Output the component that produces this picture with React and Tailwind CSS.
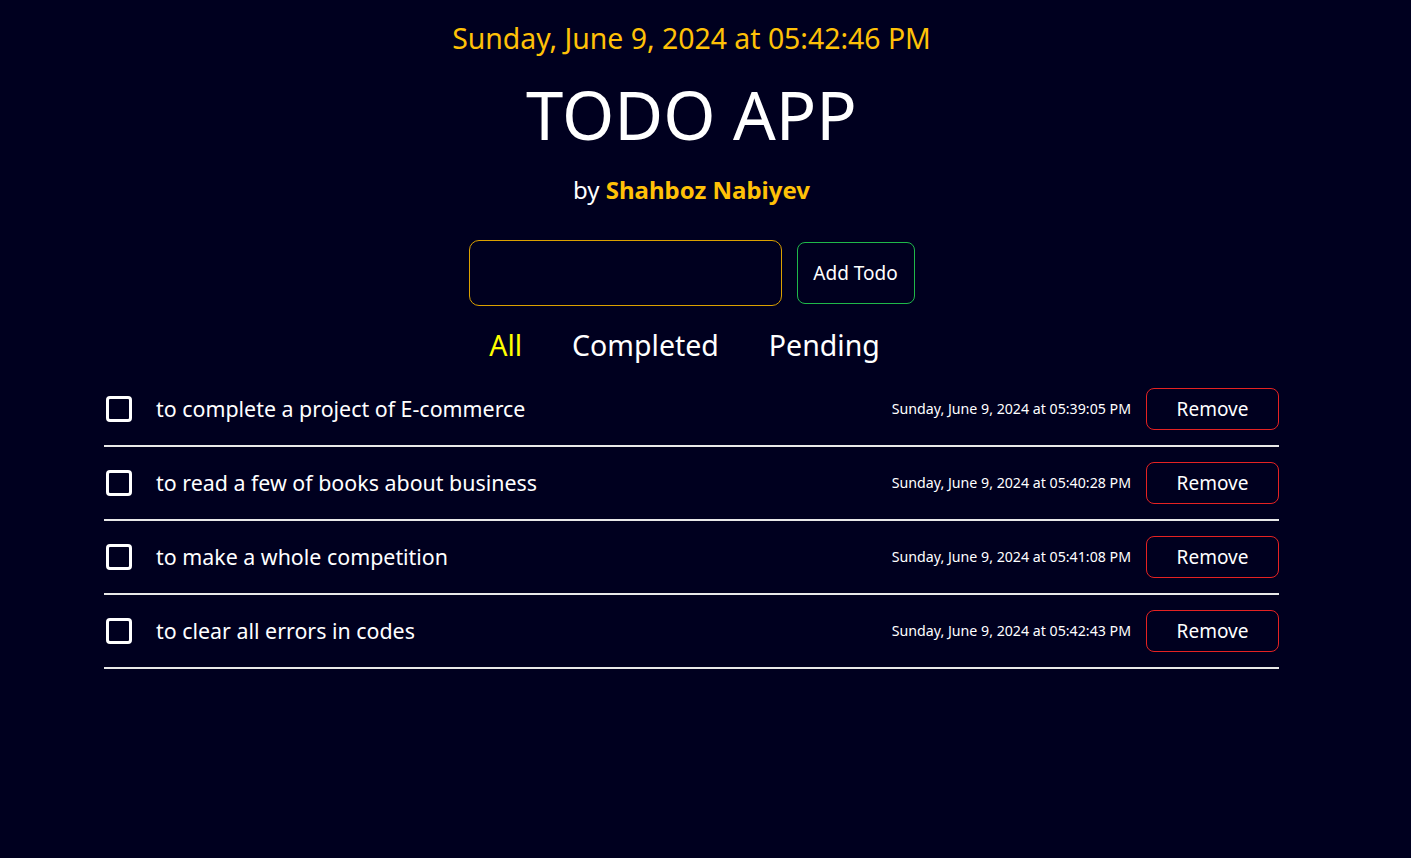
import React, { useState } from 'react';

const todos = [
  { id: 1, text: 'to complete a project of E-commerce', date: 'Sunday, June 9, 2024 at 05:39:05 PM' },
  { id: 2, text: 'to read a few of books about business', date: 'Sunday, June 9, 2024 at 05:40:28 PM' },
  { id: 3, text: 'to make a whole competition', date: 'Sunday, June 9, 2024 at 05:41:08 PM' },
  { id: 4, text: 'to clear all errors in codes', date: 'Sunday, June 9, 2024 at 05:42:43 PM' },
];

function TodoRow({ todo }) {
  return (
    <div className="flex items-center h-[74px] border-b-2 border-[#e8e8e8]">
      <span className="w-[26px] h-[26px] ml-[2px] rounded-[4px] border-[3px] border-white shrink-0" />
      <span className="ml-[24px] text-[21.4px] text-white flex-1">{todo.text}</span>
      <span className="text-[14.2px] text-white mr-[15px]">{todo.date}</span>
      <button className="w-[133px] h-[42px] rounded-[8px] border border-[#e52222] text-white text-[19px]">
        Remove
      </button>
    </div>
  );
}

export default function App() {
  const [filter] = useState('All');

  return (
    <div className="min-h-screen bg-[#00001f] text-white font-['Noto_Sans',sans-serif]">
      <div className="w-[1383px] px-[104px]">
        <div className="flex flex-col items-center pt-[16px]">
          <p className="text-[28.4px] leading-[44px] text-[#ffc107]">Sunday, June 9, 2024 at 05:42:46 PM</p>
          <h1 className="text-[67px] leading-[96px] mt-[6px]">TODO APP</h1>
          <p className="text-[24px] leading-[32px] mt-[12px]">
            by <span className="font-bold text-[#ffc107]">Shahboz Nabiyev</span>
          </p>

          <div className="flex items-center gap-[15px] mt-[34px]">
            <input className="w-[313px] h-[66px] rounded-[10px] border border-[#dba000] bg-transparent outline-none px-3 text-white" />
            <button className="w-[118px] h-[62px] rounded-[8px] border border-[#1fb84a] text-[19px] text-white">
              Add Todo
            </button>
          </div>

          <div className="flex items-center gap-[50px] mt-[19px] mr-[14px] text-[28.5px] leading-[40px]">
            {['All', 'Completed', 'Pending'].map((f) => (
              <button key={f} className={f === filter ? 'text-[#ffff00]' : 'text-white'}>
                {f}
              </button>
            ))}
          </div>
        </div>

        <div className="mt-[8px]">
          {todos.map((t) => (
            <TodoRow key={t.id} todo={t} />
          ))}
        </div>
      </div>
    </div>
  );
}
